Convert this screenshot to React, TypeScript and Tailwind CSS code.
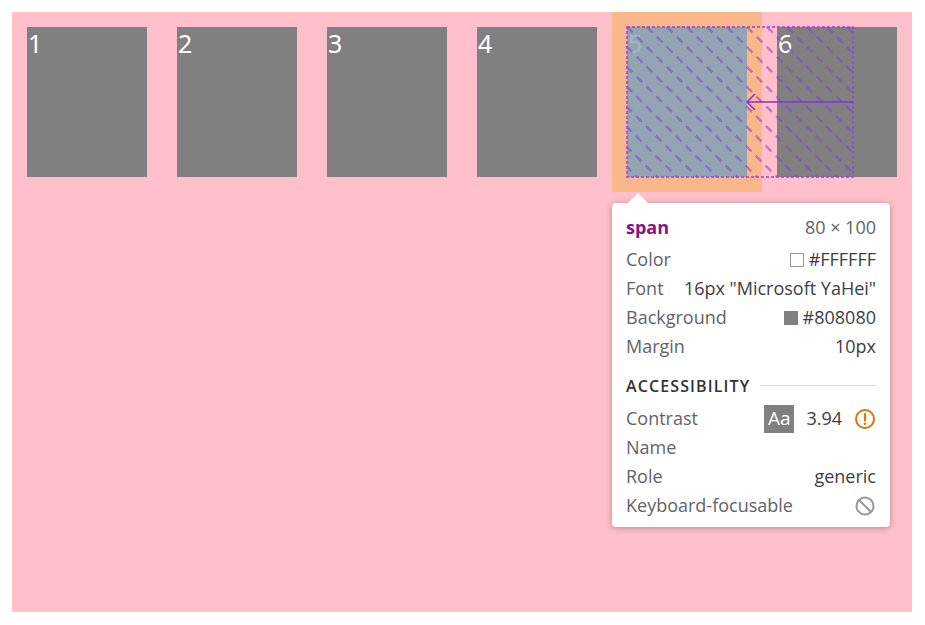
import React from 'react'

const boxes = ['1', '2', '3', '4', '5', '6']

const Hatch = () => {
  const lines = []
  for (let k = -160; k < 240; k += 20) {
    lines.push(<line key={k} x1={k} y1={0} x2={k + 150} y2={150} />)
  }
  return (
    <svg width="228" height="152" viewBox="-1 -1 228 152" className="absolute left-[614px] top-[14px]">
      <defs>
        <clipPath id="hclip">
          <rect x="0" y="0" width="226" height="150" />
        </clipPath>
      </defs>
      <g clipPath="url(#hclip)" stroke="rgba(140,60,225,0.6)" strokeWidth="2.2" strokeDasharray="8 6">
        {lines}
      </g>
      <rect x="0" y="0" width="226" height="150" fill="none" stroke="#9a3fe0" strokeWidth="1.5" strokeDasharray="3 2" />
      <g stroke="#8a2be2" strokeWidth="1.5" fill="none">
        <line x1="120" y1="75" x2="226" y2="75" />
        <polyline points="128,67 120,75 128,83" />
      </g>
    </svg>
  )
}

const Row = ({ label, children, className = '' }: { label: string; children?: React.ReactNode; className?: string }) => (
  <div className={`flex items-center justify-between h-[29px] ${className}`}>
    <span className="text-[#5f6368]">{label}</span>
    <span className="flex items-center text-[#3c4043]">{children}</span>
  </div>
)

const App = () => {
  return (
    <div className="w-[925px] h-[625px] bg-white pt-[12px] pl-[12px]" style={{ fontFamily: '"Open Sans", "Noto Sans", sans-serif' }}>
      <div className="relative w-[900px] h-[600px] bg-[#FFC0CB]">
        <div className="flex">
          {boxes.map((b) => (
            <span
              key={b}
              className="block w-[120px] h-[150px] m-[15px] bg-[#808080] text-white text-[25px] leading-[32px] pl-[1px]"
              style={{ fontFamily: '"Noto Sans", "Open Sans", sans-serif' }}
            >
              {b}
            </span>
          ))}
        </div>

        {/* inspector overlay */}
        <div className="absolute left-[600px] top-0 w-[150px] h-[180px] bg-[rgba(246,178,107,0.66)]" />
        <div className="absolute left-[615px] top-[15px] w-[120px] h-[150px] bg-[rgba(111,168,220,0.62)]" />
        <Hatch />

        {/* tooltip */}
        <div className="absolute left-[600px] top-[191px] w-[278px] h-[324px] bg-white rounded-[4px] shadow-[0_1px_6px_rgba(0,0,0,0.3)] px-[14px] pt-[10px] text-[18px]">
          <div className="absolute left-[16px] -top-[10px] w-0 h-0 border-l-[10px] border-r-[10px] border-b-[10px] border-l-transparent border-r-transparent border-b-white" />
          <div className="flex items-center justify-between h-[29px]">
            <span className="font-bold text-[#881280]">span</span>
            <span className="text-[#5f6368]">80 × 100</span>
          </div>
          <div className="mt-[3px]">
            <Row label="Color">
              <span className="inline-block w-[14px] h-[14px] border border-[#999] bg-white mr-[5px]" />
              #FFFFFF
            </Row>
            <Row label="Font">16px "Microsoft YaHei"</Row>
            <Row label="Background">
              <span className="inline-block w-[14px] h-[14px] bg-[#808080] mr-[5px]" />
              #808080
            </Row>
            <Row label="Margin">10px</Row>
          </div>
          <div className="flex items-center mt-[10px] h-[29px]">
            <span className="text-[16px] font-semibold tracking-[0.07em] text-[#333]">ACCESSIBILITY</span>
            <div className="flex-1 h-px bg-[#dadce0] ml-[10px]" />
          </div>
          <div className="mt-[4px]">
            <Row label="Contrast">
              <span className="inline-flex items-center justify-center w-[30px] h-[28px] bg-[#808080] text-white text-[19px] mr-[12px]">Aa</span>
              <span className="mr-[12px]">3.94</span>
              <svg width="22" height="22" viewBox="0 0 22 22">
                <circle cx="11" cy="11" r="9" fill="none" stroke="#e37400" strokeWidth="2" />
                <line x1="11" y1="6" x2="11" y2="12.5" stroke="#e37400" strokeWidth="2.2" strokeLinecap="round" />
                <circle cx="11" cy="15.8" r="1.3" fill="#e37400" />
              </svg>
            </Row>
            <Row label="Name" />
            <Row label="Role">generic</Row>
            <Row label="Keyboard-focusable">
              <svg width="22" height="22" viewBox="0 0 22 22">
                <circle cx="11" cy="11" r="8.5" fill="none" stroke="#9a9a9a" strokeWidth="2" />
                <line x1="5" y1="5" x2="17" y2="17" stroke="#9a9a9a" strokeWidth="2" />
              </svg>
            </Row>
          </div>
        </div>
      </div>
    </div>
  )
}

export default App
